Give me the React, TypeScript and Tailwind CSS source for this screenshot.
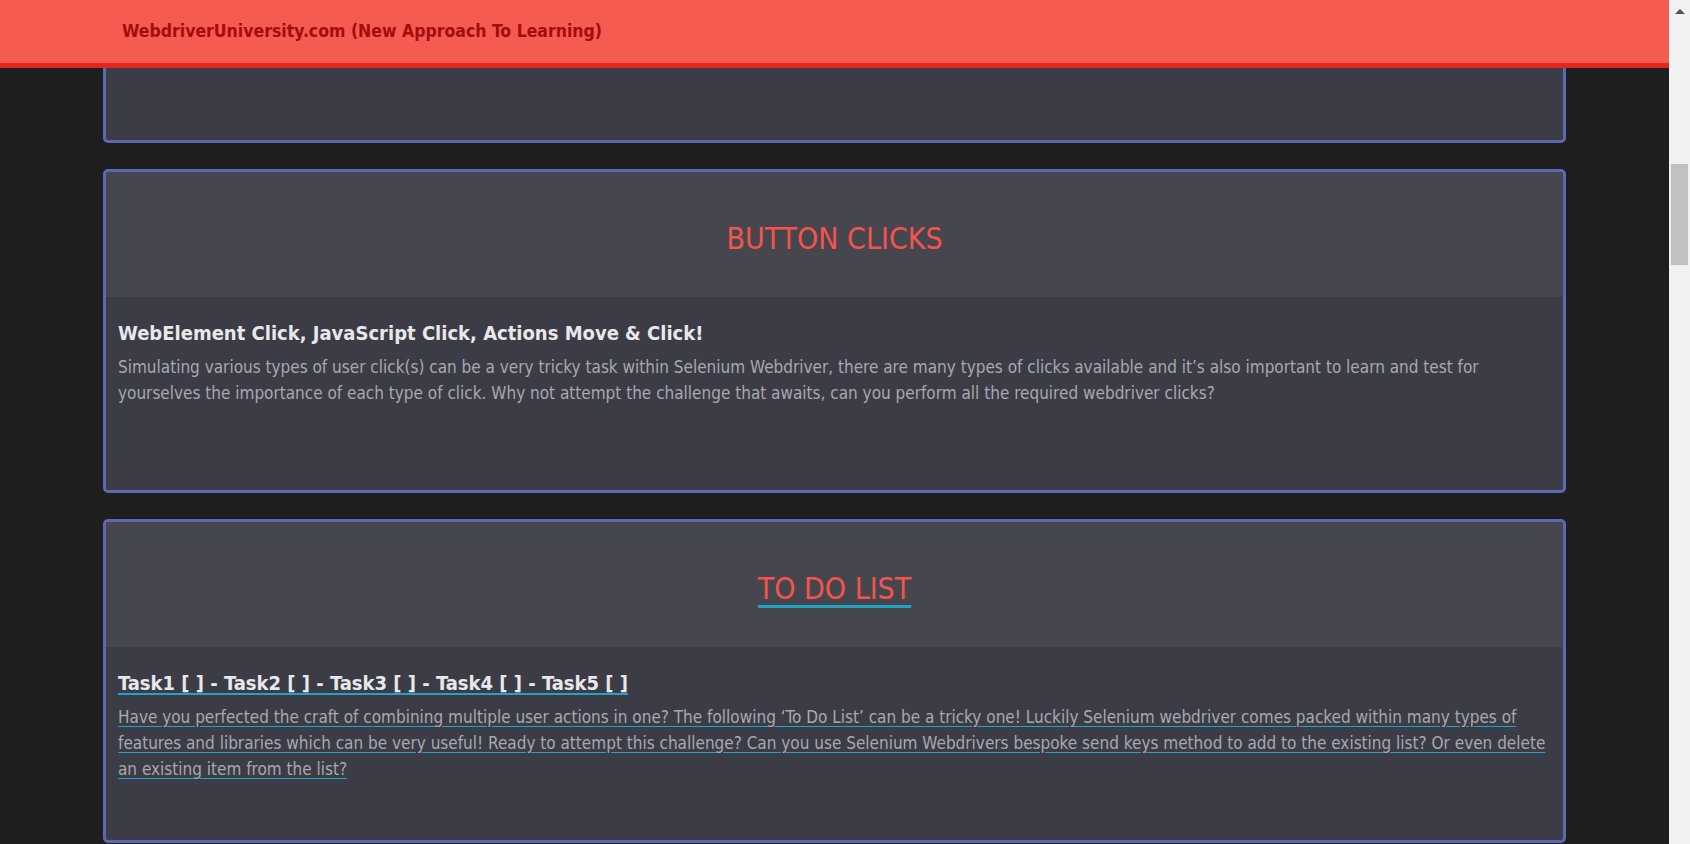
import React from "react";

const font = "font-['DejaVu_Sans_Condensed','DejaVu_Sans',Tahoma,sans-serif]";

type Card = {
  heading: string;
  title: string;
  body: string;
  link?: boolean;
};

// first card is scrolled up behind the fixed header, so it is left empty
const cards: Card[] = [
  { heading: "", title: "", body: "" },
  {
    heading: "BUTTON CLICKS",
    title: "WebElement Click, JavaScript Click, Actions Move & Click!",
    body: "Simulating various types of user click(s) can be a very tricky task within Selenium Webdriver, there are many types of clicks available and it\u2019s also important to learn and test for yourselves the importance of each type of click. Why not attempt the challenge that awaits, can you perform all the required webdriver clicks?",
  },
  {
    heading: "TO DO LIST",
    title: "Task1 [ ] - Task2 [ ] - Task3 [ ] - Task4 [ ] - Task5 [ ]",
    body: "Have you perfected the craft of combining multiple user actions in one? The following \u2018To Do List\u2019 can be a tricky one! Luckily Selenium webdriver comes packed within many types of features and libraries which can be very useful! Ready to attempt this challenge? Can you use Selenium Webdrivers bespoke send keys method to add to the existing list? Or even delete an existing item from the list?",
    link: true,
  },
];

const SectionCard = ({ card }: { card: Card }) => {
  const underline = card.link
    ? "underline decoration-[#1fa3c7] underline-offset-[3px]"
    : "";
  return (
    <div className="h-[324px] rounded-[5px] border-[3px] border-[#5c68b0] bg-[#3c3c46] overflow-hidden flex flex-col">
      <div className="h-[125px] shrink-0 bg-[#46464f] flex items-center justify-center pt-[9px]">
        {card.heading && (
          <h1
            className={`text-[30px] leading-none text-[#f5534b] ${
              card.link
                ? "underline decoration-[#1fa3c7] decoration-[3px] underline-offset-[6px]"
                : ""
            }`}
          >
            {card.heading}
          </h1>
        )}
      </div>
      {card.title && (
        <div className="px-[12px] pt-[24px]">
          <h2
            className={`text-[20px] leading-[24px] font-bold text-[#e8e8ea] ${
              card.link ? "underline decoration-[#1fa3c7] decoration-2 underline-offset-[3px]" : ""
            }`}
          >
            {card.title}
          </h2>
          <p className={`mt-[9px] text-[17px] leading-[26px] text-[#a8a8ae] ${underline}`}>
            {card.body}
          </p>
        </div>
      )}
    </div>
  );
};

export default function App() {
  return (
    <div className={`flex h-[844px] w-[1690px] overflow-hidden bg-[#1e1e1e] ${font}`}>
      <div className="relative flex-1 overflow-hidden">
        <div className="-mt-[181px] px-[103px] flex flex-col gap-[26px]">
          {cards.map((c, i) => (
            <SectionCard key={i} card={c} />
          ))}
        </div>

        <header className="absolute inset-x-0 top-0 h-[68px] bg-[#f55b50] border-b-[5px] border-[#e2271f] flex items-center pl-[122px]">
          <span className="text-[17.5px] font-bold text-[#a30d0d]">
            WebdriverUniversity.com (New Approach To Learning)
          </span>
        </header>
      </div>

      <div className="w-[21px] shrink-0 bg-[#f1f1f1] flex flex-col items-center">
        <div className="mt-[9px] h-0 w-0 border-x-[5px] border-b-[5px] border-x-transparent border-b-[#505050]" />
        <div className="mt-[150px] h-[101px] w-[17px] bg-[#c1c1c1]" />
      </div>
    </div>
  );
}
